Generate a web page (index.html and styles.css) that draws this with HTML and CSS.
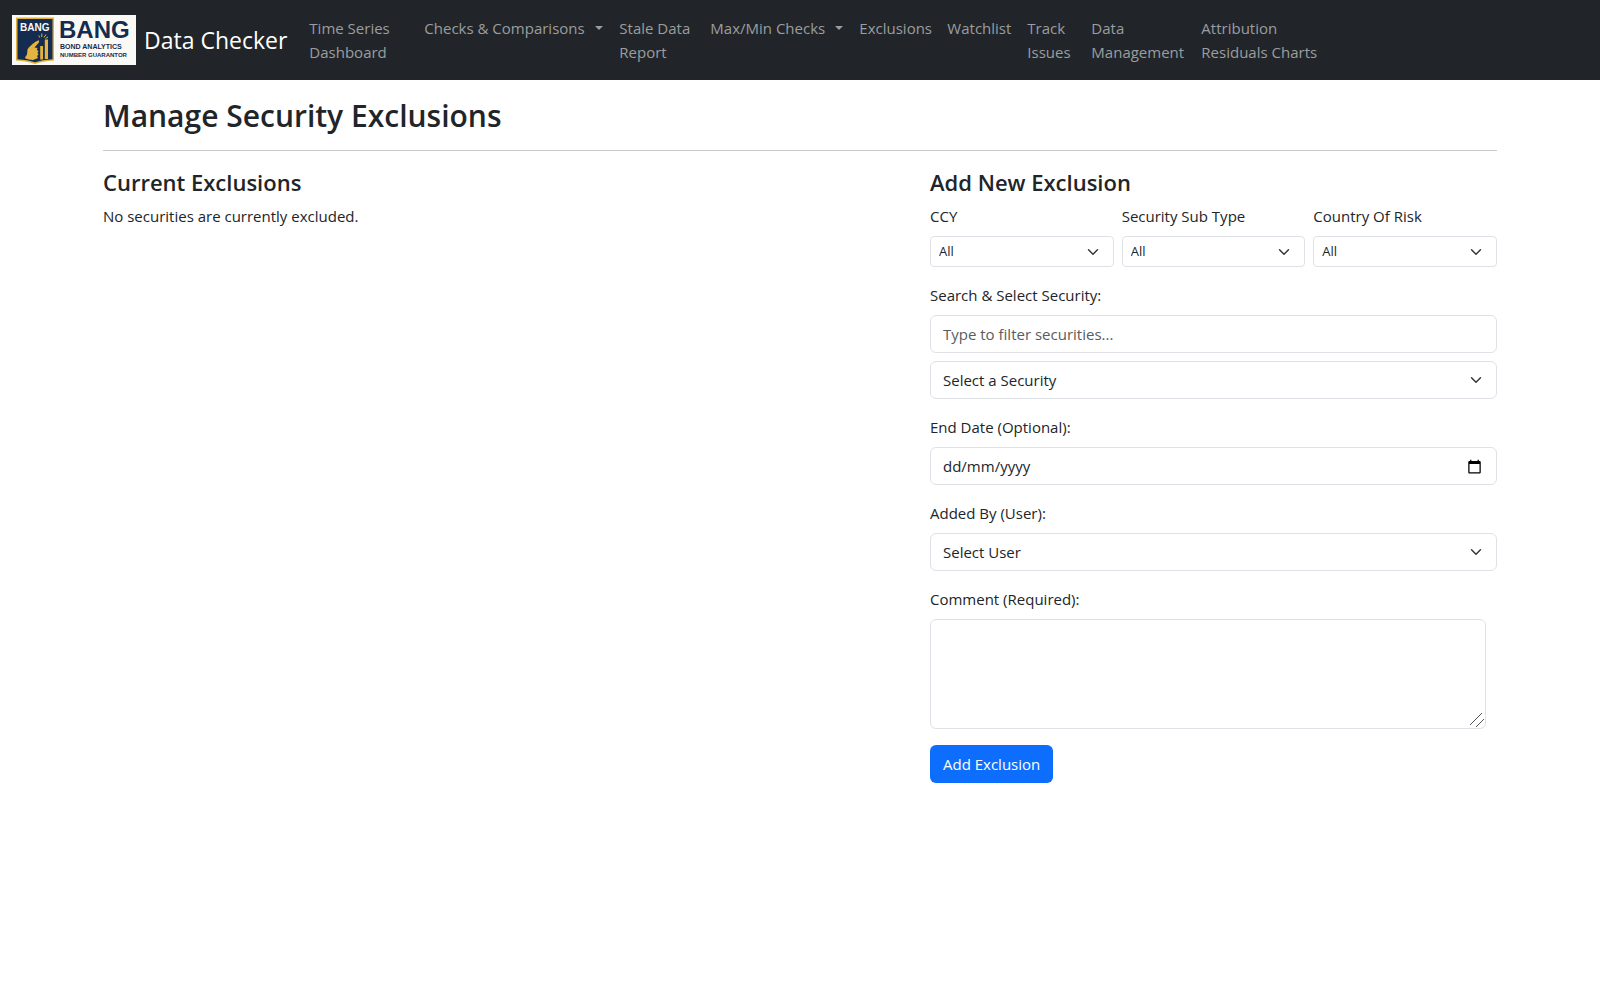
FILE: index.html
```html
<!DOCTYPE html>
<html lang="en-GB">
<head>
  <meta charset="utf-8">
  <meta name="viewport" content="width=device-width, initial-scale=1">
  <title>Manage Security Exclusions</title>
  <link rel="stylesheet" href="styles.css">
</head>
<body>
  <nav class="navbar">
    <a class="brand" href="#">
      <svg class="brand-logo" viewBox="0 0 124 50" role="img" aria-label="BANG logo">
        <rect width="124" height="50" fill="#fbf9f5"/>
        <path d="M4 2.5H42V45.5C34 46 28 47 23 49C18 47 12 46 4 45.5Z" fill="#dfb13c"/>
        <path d="M5.500 4H40.500V44.200C33 44.700 28 45.500 23 47.300C18 45.500 13 44.700 5.500 44.200Z" fill="#142c4f"/>
        <text class="logo-text" x="8" y="16" font-size="10" fill="#fbf9f5">BANG</text>
        <path d="M26.500 25.200C27.600 25.600 27.200 27 26.500 27.900L22.500 32.500L25.500 33L24.800 35L26.500 36L25.500 38L26.500 39.500L25 41L26 43L21 45C18 44.500 15.500 44.500 13.500 43.500L13 42.500L15 39.500L15.500 34.500C17 31.500 23 26.500 26.500 25.200Z" fill="#e3b440"/>
        <path d="M28.200 31H31V44.500H28.200ZM32.800 24.500H36V44H32.800Z" fill="#e3b440"/>
        <path d="M29.800 22V18.500M27.800 22.500L26.800 20.500M32 22.500L34 19.500M33.500 23.500L36 22" stroke="#e3b440" stroke-width="1" fill="none"/>
        <text class="logo-text" x="47" y="23" font-size="24" fill="#142c4f">BANG</text>
        <text class="logo-text" x="48" y="34" font-size="7" fill="#142c4f">BOND ANALYTICS</text>
        <text class="logo-text" x="48" y="42" font-size="6" fill="#142c4f">NUMBER GUARANTOR</text>
      </svg>
      <span>Data Checker</span>
    </a>
    <ul class="nav-list">
      <li><a class="nav-link" href="#">Time Series Dashboard</a></li>
      <li><a class="nav-link has-menu" href="#">Checks &amp; Comparisons</a></li>
      <li><a class="nav-link" href="#">Stale Data Report</a></li>
      <li><a class="nav-link has-menu" href="#">Max/Min Checks</a></li>
      <li><a class="nav-link" href="#">Exclusions</a></li>
      <li><a class="nav-link" href="#">Watchlist</a></li>
      <li><a class="nav-link" href="#">Track Issues</a></li>
      <li><a class="nav-link" href="#">Data Management</a></li>
      <li><a class="nav-link" href="#">Attribution Residuals Charts</a></li>
    </ul>
  </nav>

  <main class="page">
    <h1 class="page-title">Manage Security Exclusions</h1>
    <hr class="divider">
    <div class="columns">
      <section>
        <h2 class="section-title">Current Exclusions</h2>
        <p class="empty-note">No securities are currently excluded.</p>
      </section>

      <section>
        <h2 class="section-title">Add New Exclusion</h2>
        <form class="form">
          <div class="filters">
            <div class="field">
              <label for="ccy">CCY</label>
              <select class="control select select-small" id="ccy"><option>All</option></select>
            </div>
            <div class="field">
              <label for="subtype">Security Sub Type</label>
              <select class="control select select-small" id="subtype"><option>All</option></select>
            </div>
            <div class="field">
              <label for="country">Country Of Risk</label>
              <select class="control select select-small" id="country"><option>All</option></select>
            </div>
          </div>
          <div class="field">
            <label for="search">Search &amp; Select Security:</label>
            <input class="control" id="search" type="text" placeholder="Type to filter securities...">
            <select class="control select" aria-label="Security"><option>Select a Security</option></select>
          </div>
          <div class="field">
            <label for="end-date">End Date (Optional):</label>
            <div class="control date-box">
              <input class="date-input" id="end-date" type="text" inputmode="numeric" placeholder="dd/mm/yyyy">
              <button class="date-button" type="button" aria-label="Choose date">
                <svg class="date-icon" viewBox="0 0 24 24" aria-hidden="true"><path d="M20 3h-1V1h-2v2H7V1H5v2H4c-1.100 0-2 .9-2 2v16c0 1.100.9 2 2 2h16c1.100 0 2-.9 2-2V5c0-1.100-.9-2-2-2zm0 18H4V8h16v13z"/></svg>
              </button>
            </div>
          </div>
          <div class="field">
            <label for="user">Added By (User):</label>
            <select class="control select" id="user"><option>Select User</option></select>
          </div>
          <div class="field">
            <label for="comment">Comment (Required):</label>
            <textarea class="control comment" id="comment" rows="4"></textarea>
          </div>
          <button class="button" type="button">Add Exclusion</button>
        </form>
      </section>
    </div>
  </main>
</body>
</html>
```
FILE: styles.css
```css
* {
  box-sizing: border-box;
}

body {
  margin: 0;
  background: #fff;
  color: #212529;
  font-family: "Open Sans", "Noto Sans", sans-serif;
  font-size: 15px;
  line-height: 24px;
}

.navbar {
  display: flex;
  align-items: center;
  gap: 14px;
  padding: 8px 12px;
  background: #212529;
}

.brand {
  display: flex;
  flex: none;
  align-items: center;
  gap: 8px;
  color: #fff;
  font-size: 23px;
  line-height: 36px;
  text-decoration: none;
}

.brand-logo {
  display: block;
  width: 124px;
  height: 50px;
}

.logo-text {
  font-family: "Liberation Sans", sans-serif;
  font-weight: 700;
}

.nav-list {
  display: grid;
  grid-template-columns: 115px 195px 91px 149px 88px 80px 64px 110px 140px;
  margin: 0;
  padding: 0;
  list-style: none;
}

.nav-link {
  display: block;
  padding: 8px;
  color: #9b9d9f;
  text-decoration: none;
}

.has-menu {
  white-space: nowrap;
}

.has-menu::after {
  content: "";
  display: inline-block;
  margin-left: 10px;
  border: 4px solid transparent;
  border-top-color: currentColor;
  border-bottom: 0;
  vertical-align: 4px;
}

.page {
  max-width: 1418px;
  margin: 0 auto;
  padding: 16px 12px;
}

.page-title {
  margin: 0;
  font-size: 30px;
  font-weight: 600;
  line-height: 40px;
}

.divider {
  margin: 14px 0 16px;
  border: 0;
  border-top: 1px solid #c8c9ca;
}

.columns {
  display: grid;
  grid-template-columns: 803fr 567fr;
  gap: 24px;
}

.section-title {
  margin: 0 0 6px;
  font-size: 22px;
  font-weight: 600;
  line-height: 31px;
}

.empty-note {
  margin: 0;
}

.form {
  display: flex;
  flex-direction: column;
  gap: 16px;
}

.filters {
  display: grid;
  grid-template-columns: repeat(3, 1fr);
  gap: 8px;
}

.field {
  display: flex;
  flex-direction: column;
  gap: 8px;
}

.control {
  width: 100%;
  height: 38px;
  padding: 6px 12px;
  border: 1px solid #dee2e6;
  border-radius: 6px;
  background-color: #fff;
  color: #212529;
  font: inherit;
}

.control::placeholder {
  color: #595c5f;
  opacity: 1;
}

.select {
  appearance: none;
  background-image: url("data:image/svg+xml,%3csvg xmlns='http://www.w3.org/2000/svg' viewBox='0 0 16 16'%3e%3cpath fill='none' stroke='%23343a40' stroke-linecap='round' stroke-linejoin='round' stroke-width='2' d='m2 5 6 6 6-6'/%3e%3c/svg%3e");
  background-repeat: no-repeat;
  background-position: right 14px center;
  background-size: 12px 12px;
}

.select-small {
  height: 31px;
  padding: 4px 8px;
  border-radius: 4px;
  font-size: 13px;
  line-height: 21px;
}

.date-box {
  display: flex;
  align-items: center;
}

.date-input {
  flex: 1;
  min-width: 0;
  padding: 0;
  border: 0;
  background: none;
  color: inherit;
  font: inherit;
}

.date-input::placeholder {
  color: #212529;
  opacity: 1;
}

.date-button {
  padding: 2px;
  border: 0;
  background: none;
}

.date-icon {
  display: block;
  width: 15px;
  height: 15px;
}

.comment {
  width: 98%;
  height: auto;
  resize: vertical;
}

.comment::-webkit-resizer {
  background: url("data:image/svg+xml,%3csvg xmlns='http://www.w3.org/2000/svg' viewBox='0 0 18 18'%3e%3cpath fill='none' stroke='%23555' d='M1 17 17 1M9 17l8-8'/%3e%3c/svg%3e") right bottom / 18px 18px no-repeat;
}

.comment::-webkit-scrollbar {
  width: 18px;
  height: 18px;
}

.button {
  align-self: flex-start;
  padding: 7px 13px;
  border: 0;
  border-radius: 6px;
  background: #0d6efd;
  color: #fff;
  font: inherit;
}
```
